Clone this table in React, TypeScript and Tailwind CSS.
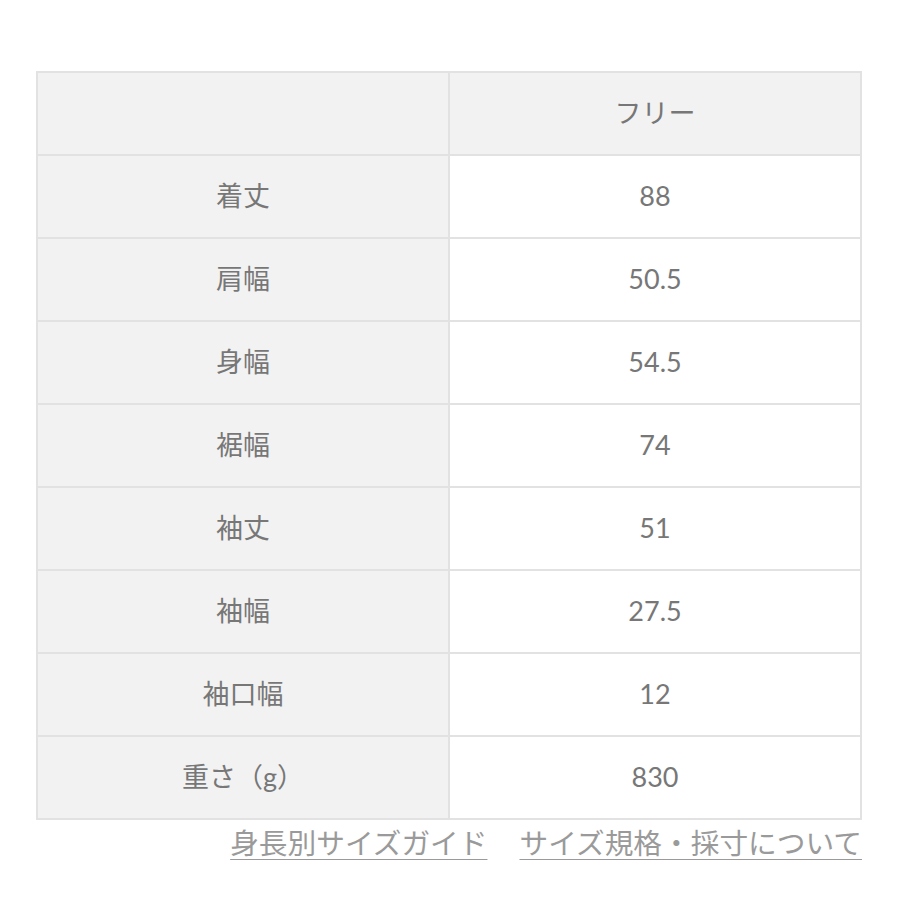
const rows: [string, string][] = [
  ["着丈", "88"],
  ["肩幅", "50.5"],
  ["身幅", "54.5"],
  ["裾幅", "74"],
  ["袖丈", "51"],
  ["袖幅", "27.5"],
  ["袖口幅", "12"],
  ["重さ（g）", "830"],
];

export default function App() {
  return (
    <main className="min-h-[900px] w-[900px] bg-white pt-[71px] pl-[36px] font-['Lato','Noto_Sans_CJK_JP',sans-serif] text-[#777]">
      <div className="w-[826px]">
        <table className="w-full table-fixed border-collapse border-2 border-[#e2e2e2] text-[27px]">
          <thead>
            <tr className="h-[83px] bg-[#f2f2f2]">
              <th className="border-2 border-[#e2e2e2] font-normal"></th>
              <th className="border-2 border-[#e2e2e2] font-normal">フリー</th>
            </tr>
          </thead>
          <tbody>
            {rows.map(([label, value]) => (
              <tr key={label} className="h-[83px]">
                <td className="border-2 border-[#e2e2e2] bg-[#f2f2f2] text-center">{label}</td>
                <td className="border-2 border-[#e2e2e2] bg-white text-center">{value}</td>
              </tr>
            ))}
          </tbody>
        </table>
        <div className="mt-[3px] flex justify-end gap-[32px] text-[28.7px] leading-[40px] text-[#9a9a9a]">
          <a href="#" className="underline decoration-1 underline-offset-[5px]">身長別サイズガイド</a>
          <a href="#" className="underline decoration-1 underline-offset-[5px]">サイズ規格・採寸について</a>
        </div>
      </div>
    </main>
  );
}
